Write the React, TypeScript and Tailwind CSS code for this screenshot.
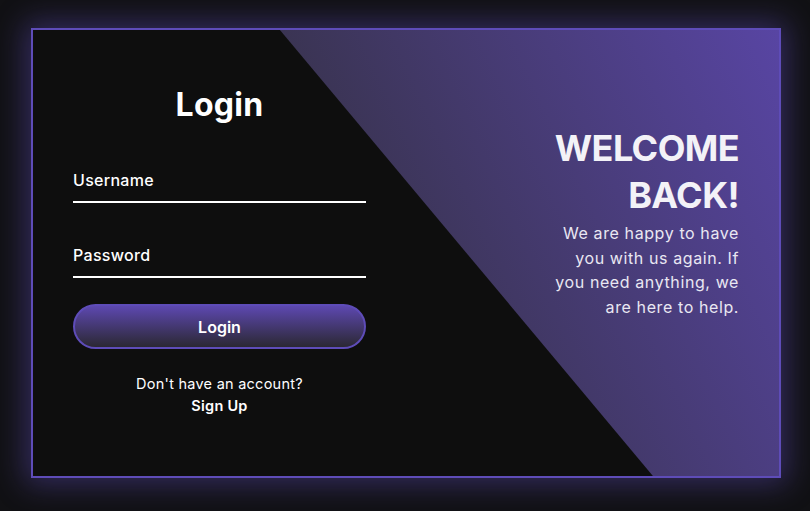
import React from "react";

export default function App() {
  return (
    <div
      className="w-[810px] h-[511px] bg-[#111114] pt-[28px] pl-[31px] text-white"
      style={{ fontFamily: "Inter, 'Noto Sans', sans-serif" }}
    >
      <div className="relative w-[750px] h-[450px] border-2 border-[#5e4cb8] bg-[#0e0e0e] shadow-[0_0_28px_6px_rgba(94,76,184,0.45)] overflow-hidden">
        <div className="absolute inset-0 z-0 bg-[linear-gradient(65deg,#1e1e24_0%,#3a3452_47%,#5845a3_100%)] [clip-path:polygon(33.1%_0,100%_0,100%_100%,83.1%_100%)]" />
        <div className="relative z-10 grid grid-cols-2 h-full">
          <div className="flex flex-col px-[40px] pt-[55px]">
            <h2 className="h-[40px] leading-[40px] text-[32px] font-bold text-center text-white tracking-[0.3px]">Login</h2>
            <div className="mt-[28px] h-[50px] border-b-2 border-white flex items-center pt-[5px]">
              <span className="text-[16px] font-medium tracking-[0.3px]">Username</span>
            </div>
            <div className="mt-[25px] h-[50px] border-b-2 border-white flex items-center pt-[5px]">
              <span className="text-[16px] font-medium tracking-[0.3px]">Password</span>
            </div>
            <button className="mt-[26px] h-[45px] w-full rounded-full border-2 border-[#5e4cb8] bg-[linear-gradient(180deg,#5d48b0,#2b2833)] text-[16px] font-semibold text-white">
              Login
            </button>
            <div className="mt-[24px] text-center text-[14.5px] leading-[22px] tracking-[0.25px]">
              <p>Don't have an account?</p>
              <p className="font-semibold">Sign Up</p>
            </div>
          </div>
          <div className="flex flex-col items-end text-right pr-[40px] pt-[95px]">
            <h2 className="text-[36px] leading-[47px] font-bold uppercase text-[#f3f2f7] tracking-[-0.6px]">
              Welcome
              <br />
              Back!
            </h2>
            <p className="mt-[2px] text-[16px] leading-[24.5px] text-[#e9e7f2] tracking-[0.6px]">
              We are happy to have
              <br />
              you with us again. If
              <br />
              you need anything, we
              <br />
              are here to help.
            </p>
          </div>
        </div>
      </div>
    </div>
  );
}
